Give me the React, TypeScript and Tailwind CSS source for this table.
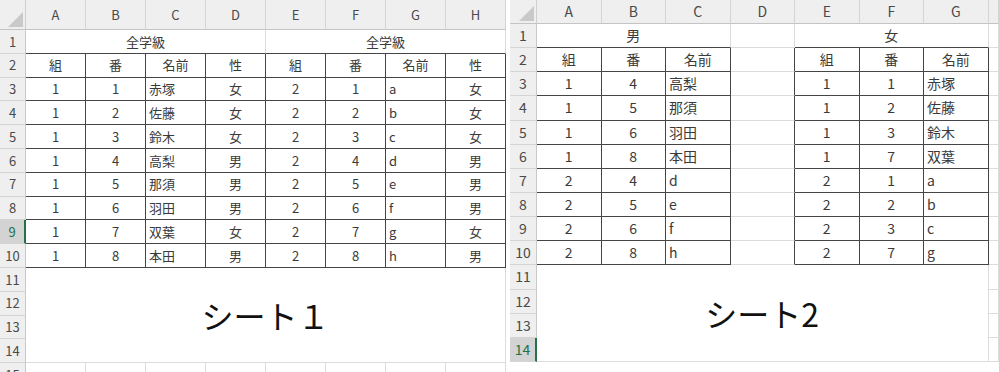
import React from 'react'

const leftRows = [
  ['1', '1', '赤塚', '女', '2', '1', 'a', '女'],
  ['1', '2', '佐藤', '女', '2', '2', 'b', '女'],
  ['1', '3', '鈴木', '女', '2', '3', 'c', '女'],
  ['1', '4', '高梨', '男', '2', '4', 'd', '男'],
  ['1', '5', '那須', '男', '2', '5', 'e', '男'],
  ['1', '6', '羽田', '男', '2', '6', 'f', '男'],
  ['1', '7', '双葉', '女', '2', '7', 'g', '女'],
  ['1', '8', '本田', '男', '2', '8', 'h', '男'],
]

const boys = [
  ['1', '4', '高梨'],
  ['1', '5', '那須'],
  ['1', '6', '羽田'],
  ['1', '8', '本田'],
  ['2', '4', 'd'],
  ['2', '5', 'e'],
  ['2', '6', 'f'],
  ['2', '8', 'h'],
]

const girls = [
  ['1', '1', '赤塚'],
  ['1', '2', '佐藤'],
  ['1', '3', '鈴木'],
  ['1', '7', '双葉'],
  ['2', '1', 'a'],
  ['2', '2', 'b'],
  ['2', '3', 'c'],
  ['2', '7', 'g'],
]

const letters = ['A', 'B', 'C', 'D', 'E', 'F', 'G', 'H']

function Cell({
  children,
  right = false,
  bottom = false,
  left = false,
  className = '',
}: {
  children?: React.ReactNode
  right?: boolean
  bottom?: boolean
  left?: boolean
  className?: string
}) {
  return (
    <div
      className={`flex items-center overflow-hidden whitespace-nowrap border-r border-b ${
        right ? 'border-r-[#454545]' : 'border-r-[#dcdcdc]'
      } ${bottom ? 'border-b-[#454545]' : 'border-b-[#dcdcdc]'} ${
        left ? 'justify-start pl-[3px]' : 'justify-center'
      } ${className}`}
    >
      {children}
    </div>
  )
}

function Corner() {
  return (
    <div className="relative border-r border-b border-r-[#cfcfcf] border-b-[#c4c4c4] bg-[#efefef]">
      <svg className="absolute right-[2px] bottom-[2px]" width="15" height="15" viewBox="0 0 15 15">
        <polygon points="15,0 15,15 0,15" fill="#c9c9c9" />
      </svg>
    </div>
  )
}

function ColHead({ children }: { children?: React.ReactNode }) {
  return (
    <div className="flex items-center justify-center border-r border-b border-r-[#d4d4d4] border-b-[#c4c4c4] bg-[#efefef] text-[#4a4a4a]">
      {children}
    </div>
  )
}

function RowHead({ n, selected = false }: { n: number; selected?: boolean }) {
  return (
    <div
      className={`flex items-center justify-center border-b border-b-[#d4d4d4] ${
        selected
          ? 'border-r-2 border-r-[#217346] bg-[#d3d3d3] text-[#217346]'
          : 'border-r border-r-[#c8c8c8] bg-[#efefef] text-[#4a4a4a]'
      }`}
    >
      {n}
    </div>
  )
}

function SheetOne() {
  const heads = ['組', '番', '名前', '性', '組', '番', '名前', '性']
  return (
    <div className="grid h-[372px] w-[507px] shrink-0 grid-cols-[26px_repeat(8,60px)] grid-rows-[30px_repeat(15,23.8px)] overflow-hidden text-[13px] text-[#3a3a3a]">
      <Corner />
      {letters.map((c) => (
        <ColHead key={c}>{c}</ColHead>
      ))}

      <RowHead n={1} />
      <Cell className="col-span-4" bottom>
        全学級
      </Cell>
      <Cell className="col-span-4" bottom>
        全学級
      </Cell>

      <RowHead n={2} />
      {heads.map((h, i) => (
        <Cell key={i} right bottom>
          {h}
        </Cell>
      ))}

      {leftRows.map((row, i) => (
        <React.Fragment key={i}>
          <RowHead n={i + 3} selected={i + 3 === 9} />
          {row.map((v, j) => (
            <Cell key={j} right bottom left={j % 4 === 2}>
              {v}
            </Cell>
          ))}
        </React.Fragment>
      ))}

      <RowHead n={11} />
      <Cell className="col-span-8 row-span-4 text-[32px] text-[#111]">シート１</Cell>
      <RowHead n={12} />
      <RowHead n={13} />
      <RowHead n={14} />

      <RowHead n={15} />
      {letters.map((c) => (
        <Cell key={c} />
      ))}
    </div>
  )
}

function SheetTwo() {
  return (
    <div className="grid h-[363px] min-w-0 flex-1 grid-cols-[27px_repeat(7,64.5px)_1fr] grid-rows-[24px_repeat(14,24.15px)] overflow-hidden text-[14px] text-[#3a3a3a]">
      <Corner />
      {letters.slice(0, 7).map((c) => (
        <ColHead key={c}>{c}</ColHead>
      ))}
      <ColHead />

      <RowHead n={1} />
      <Cell className="col-span-3" bottom>
        男
      </Cell>
      <Cell />
      <Cell className="col-span-3" bottom>
        女
      </Cell>
      <Cell />

      <RowHead n={2} />
      {['組', '番', '名前'].map((h) => (
        <Cell key={h} right bottom>
          {h}
        </Cell>
      ))}
      <Cell right />
      {['組', '番', '名前'].map((h) => (
        <Cell key={h + '2'} right bottom>
          {h}
        </Cell>
      ))}
      <Cell />

      {boys.map((row, i) => (
        <React.Fragment key={i}>
          <RowHead n={i + 3} />
          {row.map((v, j) => (
            <Cell key={j} right bottom left={j === 2}>
              {v}
            </Cell>
          ))}
          <Cell right />
          {girls[i].map((v, j) => (
            <Cell key={'g' + j} right bottom left={j === 2}>
              {v}
            </Cell>
          ))}
          <Cell />
        </React.Fragment>
      ))}

      <RowHead n={11} />
      <Cell className="col-span-7 row-span-4 text-[32px] text-[#111]">シート2</Cell>
      <Cell />
      <RowHead n={12} />
      <Cell />
      <RowHead n={13} />
      <Cell />
      <RowHead n={14} selected />
      <Cell />
    </div>
  )
}

export default function App() {
  return (
    <div className="flex h-[372px] w-[999px] gap-[3px] overflow-hidden bg-white font-['Noto_Sans_CJK_JP',sans-serif]">
      <SheetOne />
      <SheetTwo />
    </div>
  )
}
